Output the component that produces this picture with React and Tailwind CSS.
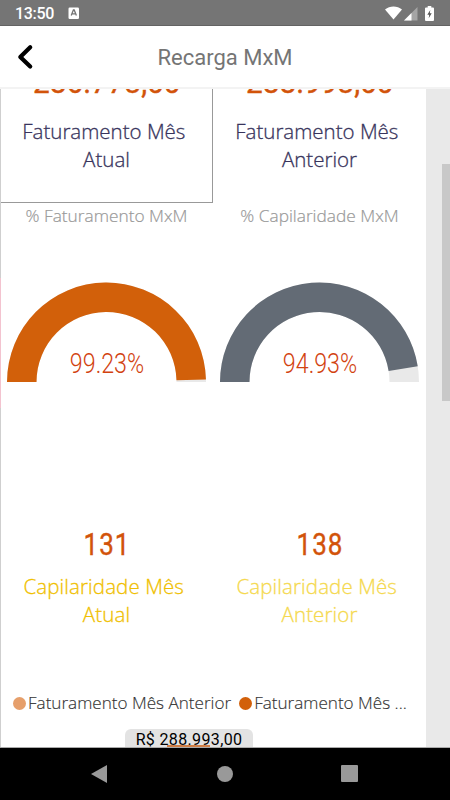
import React from 'react';

const StatusBar = () => (
    <div className="h-[26px] shrink-0 bg-[#757575] border-b border-[#636363] flex items-center pl-[15px] pr-[16px] text-white">
        <span className="font-['Roboto',sans-serif] font-medium text-[16px] leading-none tracking-[-0.3px] pt-[3px]">13:50</span>
        <svg className="ml-[14px] mt-[1px]" width="12" height="12" viewBox="0 0 12 12">
            <rect x="0.5" y="0.5" width="10.5" height="11.5" rx="1.2" fill="#fff" />
            <path d="M3.2 8.6L5.4 3h.8l2.2 5.6M4.1 6.9h3.4" stroke="#757575" strokeWidth="1.3" fill="none" />
        </svg>
        <div className="ml-auto flex items-center">
            <svg width="17" height="14" viewBox="0 0 17 14">
                <path d="M0 3.6C4.8-.6 12.2-.6 17 3.6L8.5 13.6z" fill="#fff" />
            </svg>
            <svg className="ml-[2px] mt-[2px]" width="14" height="14" viewBox="0 0 14 14">
                <path d="M0 13.5L13.5 0v13.5z" fill="#fff" opacity=".35" />
                <path d="M0 13.5L7.5 6v7.5z" fill="#fff" />
            </svg>
            <svg className="ml-[7px] mt-px" width="9" height="15" viewBox="0 0 9 15">
                <path d="M2.7 0h3.6v1.5H8a1 1 0 0 1 1 1V14a1 1 0 0 1-1 1H1a1 1 0 0 1-1-1V2.5a1 1 0 0 1 1-1h1.7z" fill="#fff" />
                <path d="M5.3 4L2.3 8.8h1.9L3.7 12.2l3-4.9H4.8z" fill="#555" />
            </svg>
        </div>
    </div>
);

const Header = () => (
    <header className="relative h-[63px] shrink-0 bg-white flex items-center justify-center border-b-2 border-[#f3f3f3]">
        <button className="absolute left-[16px] top-[17px]" aria-label="Voltar">
            <svg width="18" height="27" viewBox="0 0 18 27" fill="none" stroke="#000" strokeWidth="4.2" strokeLinecap="round" strokeLinejoin="round">
                <path d="M14.2 4.2L4.3 14l9.9 9.6" />
            </svg>
        </button>
        <h1 className="font-['Roboto',sans-serif] text-[22px] font-normal leading-none text-[#757575] pt-[3px]">Recarga MxM</h1>
    </header>
);

const Metric = ({ value, title, period, color, valueClass = 'scale-x-[0.84] tracking-[1.2px] pl-[1.2px]', gap = 'mt-[9px]' }) => (
    <div className="flex flex-col items-center text-center">
        <span className={`font-['Roboto',sans-serif] font-normal text-[31px] leading-[36px] [-webkit-text-stroke:0.4px] text-[#d2530a] ${valueClass}`}>{value}</span>
        <span className={`${gap} whitespace-nowrap font-['Open_Sans',sans-serif] font-light text-[20.5px] leading-[28px] [-webkit-text-stroke:0.3px] ${color}`}>
            {title}&nbsp;
            <br />
            {period}
        </span>
    </div>
);

const Gauge = ({ title, percent, color }) => {
    const angle = Math.PI * (1 - percent / 100);
    const point = (r) => `${100 + r * Math.cos(angle)} ${100 - r * Math.sin(angle)}`;

    return (
        <div className="flex flex-col items-center">
            <h2 className="h-[26px] font-['Open_Sans',sans-serif] font-light text-[17.3px] leading-[25px] [-webkit-text-stroke:0.2px] text-[#999] whitespace-nowrap">{title}</h2>
            <div className="relative mt-[53px] h-[101px] w-[200px]">
                <svg width="200" height="101" viewBox="0.5 0 200 101">
                    <path d="M.5 100A99.5 99.5 0 0 1 199.5 100H170A70 70 0 0 0 30 100z" fill="#e9e9e9" />
                    <path d={`M.5 100A99.5 99.5 0 0 1 ${point(99.5)}L${point(70)}A70 70 0 0 0 30 100z`} fill={color} />
                </svg>
                <span className="absolute inset-x-0 top-[66px] text-center font-['Roboto',sans-serif] font-light text-[27px] leading-[32px] text-[#d2420f] scale-x-[0.86]">
                    {percent.toFixed(2)}%
                </span>
            </div>
        </div>
    );
};

const LegendItem = ({ dot, children }) => (
    <span className="flex items-center gap-[2px] whitespace-nowrap">
        <span className={`size-[13px] rounded-full ${dot}`} />
        {children}
    </span>
);

const Dashboard = () => (
    <main className="w-[426px] shrink-0 bg-white border-l border-[#cfcfcf] overflow-hidden">
        <div className="-ml-px grid grid-cols-2">
            <div className="h-[114px] border border-t-0 border-[#999]">
                <div className="-mt-[24px]">
                    <Metric value="286.773,00" title="Faturamento Mês" period="Atual" color="text-[#38345c]" valueClass="scale-x-[0.96]" gap="mt-[16px]" />
                </div>
            </div>
            <div className="h-[114px]">
                <div className="-mt-[24px]">
                    <Metric value="288.993,00" title="Faturamento Mês" period="Anterior" color="text-[#38345c]" valueClass="scale-x-[0.96]" gap="mt-[16px]" />
                </div>
            </div>
        </div>

        <div className="-ml-px grid grid-cols-2">
            <Gauge title="% Faturamento MxM" percent={99.23} color="#d2600a" />
            <Gauge title="% Capilaridade MxM" percent={94.93} color="#636b75" />
        </div>

        <div className="-ml-px mt-[144px] grid grid-cols-2">
            <Metric value="131" title="Capilaridade Mês" period="Atual" color="text-[#f0c000] tracking-[0.1px]" />
            <Metric value="138" title="Capilaridade Mês" period="Anterior" color="text-[#f5d94f] tracking-[0.1px]" />
        </div>

        <div className="mt-[63px] ml-[12px] flex gap-[8px] font-['Open_Sans',sans-serif] font-light text-[17.1px] leading-[24px] [-webkit-text-stroke:0.15px] text-[#333]">
            <LegendItem dot="bg-[#e69f6b]">Faturamento Mês Anterior</LegendItem>
            <LegendItem dot="bg-[#d2600a]">Faturamento Mês ...</LegendItem>
        </div>

        <div className="relative mt-[14px] ml-[124px] h-[18px] w-[128px] rounded-t-md bg-[#e3e3e3] text-center">
            <span className="absolute left-[42px] bottom-0 h-[2px] w-[43px] bg-[#d07f47]" />
            <span className="relative block font-['Roboto',sans-serif] text-[16px] leading-[22px] tracking-[0.35px] text-black">R$ 288.993,00</span>
        </div>
    </main>
);

const NavBar = () => (
    <nav className="h-[53px] shrink-0 bg-black border-t border-[#aaa] flex items-center pl-[91px] pb-px">
        <svg width="16" height="18" viewBox="0 0 16 18">
            <path d="M0 9L16 0v18z" fill="#999" />
        </svg>
        <span className="ml-[110px] size-[16px] rounded-full bg-[#999]" />
        <span className="ml-[108px] size-[17px] rounded-[1px] bg-[#999]" />
    </nav>
);

const App = () => {
    return (
        <div className="w-[450px] h-[800px] flex flex-col bg-white overflow-hidden">
            <StatusBar />
            <Header />
            <div className="relative flex-1 min-h-0 flex">
                <Dashboard />
                <div className="flex-1 bg-[#e9e9e9] pt-[75px] flex justify-end items-start">
                    <div className="w-[8px] h-[237px] bg-[#c8c8c8]" />
                </div>
                <span className="absolute left-0 top-[189px] h-[130px] w-px bg-[#f3c3cf]" />
            </div>
            <NavBar />
        </div>
    );
};

export default App;
